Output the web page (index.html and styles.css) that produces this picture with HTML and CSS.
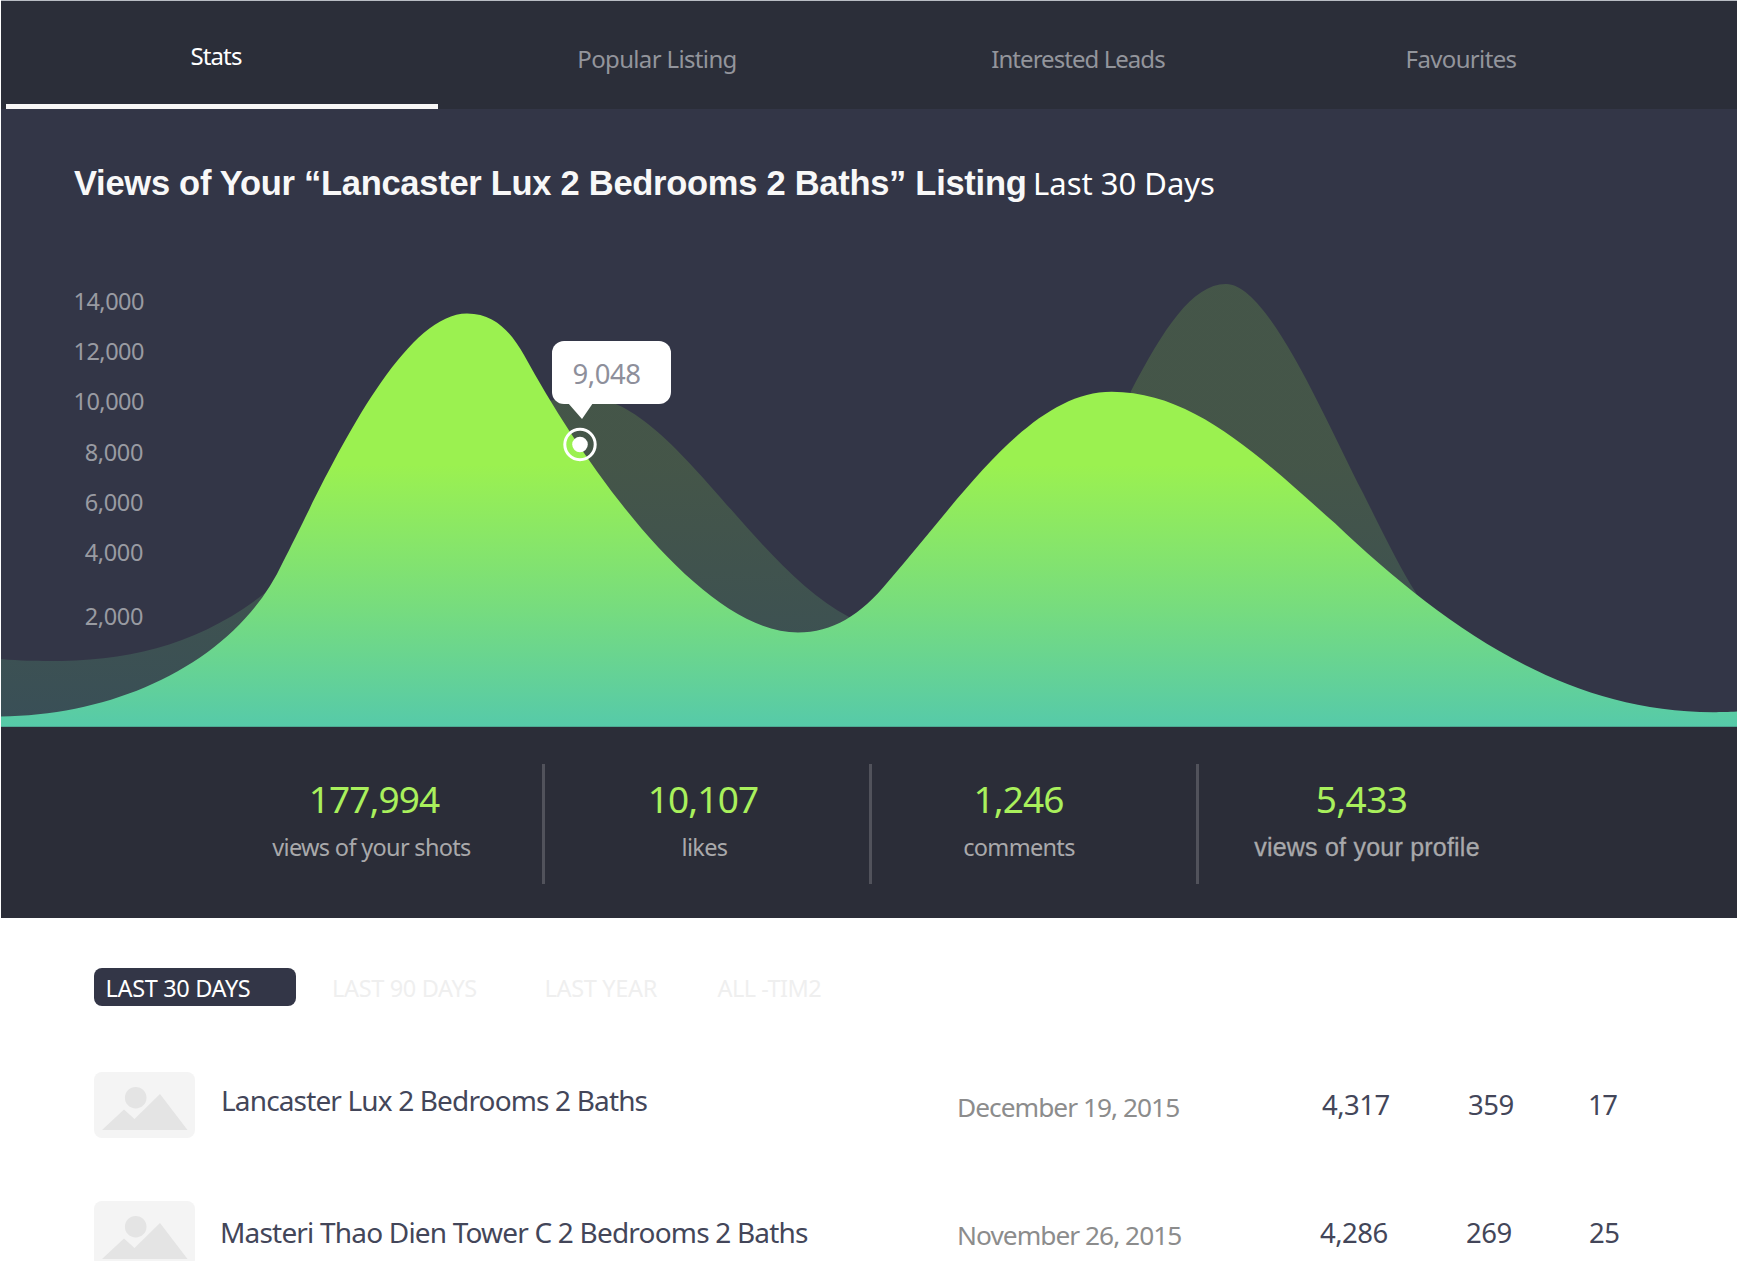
FILE: index.html
```
<!DOCTYPE html>
<html lang="en">
<head>
<meta charset="utf-8">
<title>Listing Stats</title>
<link rel="stylesheet" href="styles.css">
</head>
<body>
<div class="page">
  <nav class="tabs">
    <a class="tab tab-active">Stats</a>
    <a class="tab">Popular Listing</a>
    <a class="tab tab-tight">Interested Leads</a>
    <a class="tab">Favourites</a>
  </nav>

  <section class="chart">
    <h1 class="chart-title"><span class="chart-name">Views of Your “Lancaster Lux 2 Bedrooms 2 Baths” Listing</span><span class="chart-range">Last 30 Days</span></h1>
    <div class="plot">
      <svg class="plot-area" viewBox="1 203 1736 524" width="1736" height="524">
        <defs>
          <linearGradient id="area" gradientUnits="userSpaceOnUse" x1="0" y1="465" x2="0" y2="727">
            <stop offset="0" stop-color="#9bf150"/>
            <stop offset="0.5" stop-color="#7ade7a"/>
            <stop offset="1" stop-color="#56caa9"/>
          </linearGradient>
        </defs>
        <path fill="url(#area)" fill-opacity=".17" d="M0 659C20 661 35 661 48 661C130 661 200 645 269 590C370 500 480 397 585 397C670 397 750 565 849 617C900 640 1050 600 1131 391C1163 330 1192 284 1226 284C1268 284 1324 417 1363 493C1385 537 1400 568 1416 593L1450 726.7H0Z"/>
        <path fill="url(#area)" d="M0 716.5C120 716 238 660 283 562C318 495 396 313.500 467 313.500C496 313.500 512 334 524 355C590 476 705 632.500 798 632.500C832 632.500 861 615 888 581.700C962 497 1030 391.700 1111.700 391.700C1195 391.700 1262 459 1335 523.300C1438 621 1560 712.700 1714 712.200C1720 712.200 1730 712 1738 711.500V726.700H0Z"/>
        <circle cx="580" cy="444.500" r="15.200" fill="none" stroke="#fff" stroke-width="3"/>
        <circle cx="580" cy="444.500" r="7.800" fill="#fff"/>
      </svg>
      <ol class="axis">
        <li>14,000</li>
        <li>12,000</li>
        <li>10,000</li>
        <li>8,000</li>
        <li>6,000</li>
        <li>4,000</li>
        <li>2,000</li>
      </ol>
      <div class="tooltip">9,048</div>
    </div>
  </section>

  <section class="totals">
    <div class="total total-shots"><b>177,994</b><span>views of your shots</span></div>
    <div class="total total-likes"><b>10,107</b><span>likes</span></div>
    <div class="total total-comments"><b>1,246</b><span>comments</span></div>
    <div class="total total-profile"><b>5,433</b><span>views of your profile</span></div>
  </section>

  <section class="listings">
    <div class="filters">
      <a class="filter filter-active">LAST 30 DAYS</a>
      <a class="filter">LAST 90 DAYS</a>
      <a class="filter">LAST YEAR</a>
      <a class="filter filter-tight">ALL -TIM2</a>
    </div>

    <article class="row">
      <svg class="thumb" viewBox="0 0 101 66" width="101" height="66">
        <rect width="101" height="66" rx="8" fill="#f4f4f4"/>
        <circle cx="41.700" cy="25.700" r="10.800" fill="#e4e4e4"/>
        <path d="M8 58L30 37.500L40.500 47L66 22L93.500 58Z" fill="#e4e4e4"/>
      </svg>
      <h2 class="name">Lancaster Lux 2 Bedrooms 2 Baths</h2>
      <time class="date">December 19, 2015</time>
      <span class="num">4,317</span>
      <span class="num">359</span>
      <span class="num num-tight">17</span>
    </article>

    <article class="row row-second">
      <svg class="thumb" viewBox="0 0 101 66" width="101" height="66">
        <rect width="101" height="66" rx="8" fill="#f4f4f4"/>
        <circle cx="41.700" cy="25.700" r="10.800" fill="#e4e4e4"/>
        <path d="M8 58L30 37.500L40.500 47L66 22L93.500 58Z" fill="#e4e4e4"/>
      </svg>
      <h2 class="name">Masteri Thao Dien Tower C 2 Bedrooms 2 Baths</h2>
      <time class="date">November 26, 2015</time>
      <span class="num">4,286</span>
      <span class="num">269</span>
      <span class="num">25</span>
    </article>
  </section>
</div>
</body>
</html>
```
FILE: styles.css
```
* { box-sizing: border-box; }

body {
  margin: 0;
  background: #fff;
  font-family: "Noto Sans", "Open Sans", sans-serif;
}

.page {
  width: 1737px;
  height: 1261px;
  padding-left: 1px;
  overflow: hidden;
  white-space: nowrap;
}

/* tabs */
.tabs {
  display: grid;
  grid-template-columns: 432px 438px 404px 362px;
  height: 109px;
  padding-left: 5px;
  border-top: 1px solid #b9bdc4;
  background: #2b2e39;
}

.tab {
  padding-top: 43px;
  line-height: 30px;
  font-size: 24px;
  letter-spacing: -0.65px;
  text-align: center;
  color: #93959c;
}

.tab-tight { letter-spacing: -0.95px; }

.tab-active {
  height: 108px;
  padding-top: 40px;
  padding-right: 12px;
  border-bottom: 5px solid #f8f7f6;
  letter-spacing: -0.9px;
  color: #fff;
  z-index: 1;
}

/* chart */
.chart {
  height: 618px;
  background: #333647;
}

.chart-title {
  display: flex;
  align-items: baseline;
  height: 94px;
  margin: 0;
  padding: 54px 0 0 73px;
  font-weight: 400;
  line-height: 40px;
  color: #fff;
}

.chart-name {
  width: 959px;
  font-family: "Liberation Sans", Arial, sans-serif;
  font-size: 34.5px;
  font-weight: 700;
  letter-spacing: -0.28px;
  color: #f8f8f8;
}

.chart-range { font-size: 31px; }

.plot {
  position: relative;
  height: 524px;
}

.plot-area { display: block; }

.axis {
  position: absolute;
  top: 72.8px;
  left: 0;
  width: 143px;
  margin: 0;
  padding: 0;
  list-style: none;
  font-size: 23.5px;
  letter-spacing: -0.5px;
  line-height: 50.3px;
  text-align: right;
  color: #999ba2;
}

.axis li:nth-child(n+4) {
  padding-right: 1px;
  letter-spacing: -0.35px;
}

.axis li:last-child { padding-top: 13px; }

.tooltip {
  position: absolute;
  top: 138px;
  left: 551px;
  width: 119px;
  height: 63px;
  padding-left: 20.5px;
  border-radius: 12px;
  background: #fff;
  font-size: 27.5px;
  letter-spacing: -0.45px;
  line-height: 66px;
  color: #8e8f9b;
}

.tooltip::after {
  content: "";
  position: absolute;
  top: 62px;
  left: 16px;
  width: 25px;
  height: 16px;
  background: #fff;
  clip-path: polygon(0 0, 100% 0, 56% 100%);
}

/* totals */
.totals {
  display: grid;
  grid-template-columns: 544px 327px 327px 1fr;
  height: 191px;
  padding-top: 37px;
  background: #2b2d38;
}

.total {
  display: flex;
  flex-direction: column;
  align-items: center;
  height: 120px;
  padding-top: 11px;
  border-right: 3px solid #51525b;
}

.total b {
  margin-bottom: 9px;
  font-size: 37px;
  font-weight: 400;
  letter-spacing: -0.9px;
  line-height: 48px;
  color: #a9f05c;
}

.total span {
  font-size: 23.5px;
  letter-spacing: -0.68px;
  line-height: 30px;
  color: #a9a9ab;
}

.total-shots { padding-left: 200px; }
.total-shots b { margin-left: 5px; }
.total-likes { padding-right: 5px; }
.total-likes b { margin-right: 3px; }
.total-comments { padding-right: 30px; }
.total-comments b { margin-right: 1px; }

.total-profile {
  padding-right: 202px;
  border-right: 0;
}

.total-profile b {
  margin-right: 11px;
  letter-spacing: -0.6px;
}

.total-profile span {
  font-family: "Liberation Sans", Arial, sans-serif;
  font-size: 25px;
  letter-spacing: 0.22px;
  -webkit-text-stroke: 0.3px #a9a9ab;
}

/* listings */
.listings { padding: 50px 0 0 93px; }

.filters {
  display: grid;
  grid-template-columns: 238px 212.500px 173px auto;
  height: 104px;
}

.filter {
  height: 38px;
  padding-top: 2px;
  font-size: 23.5px;
  letter-spacing: -0.33px;
  line-height: 36px;
  color: #efefef;
}

.filter-tight { letter-spacing: -0.5px; }

.filter-active {
  width: 202px;
  padding-left: 11.500px;
  border-radius: 8px;
  background: #333647;
  color: #fff;
}

.row {
  display: grid;
  grid-template-columns: 127px 736px 365px 146px 120px 60px;
  align-items: center;
  height: 66px;
  margin-bottom: 63px;
  line-height: 36px;
}

.name {
  margin: 0;
  padding-bottom: 10px;
  font-size: 28px;
  font-weight: 400;
  letter-spacing: -0.85px;
  color: #434659;
}

.date {
  padding-top: 4px;
  font-size: 26.3px;
  letter-spacing: -0.98px;
  color: #8c8c8c;
}

.num {
  padding-bottom: 1px;
  font-size: 27.5px;
  letter-spacing: -0.5px;
  color: #434659;
}

.num-tight { letter-spacing: -1.500px; }

.row-second { grid-template-columns: 126px 737px 363px 146px 123px 60px; }
.row-second .name { padding-bottom: 4px; letter-spacing: -0.81px; }
.row-second .date { padding-top: 2px; }
.row-second .num { padding-bottom: 3px; }
```
